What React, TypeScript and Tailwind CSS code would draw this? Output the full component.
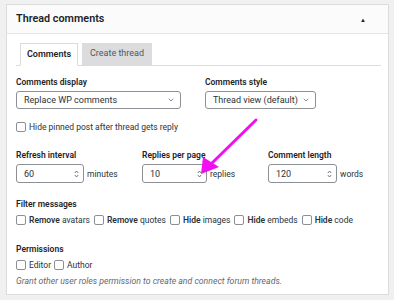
import { ChevronDown } from "lucide-react";

const font = { fontFamily: "Roboto, 'Noto Sans', sans-serif" };

function Box({ label }: { label: string }) {
  return (
    <label className="flex items-center gap-[3px] whitespace-nowrap">
      <span className="shrink-0 w-[10px] h-[10px] rounded-[2px] border border-[#8c8f94] bg-white" />
      <span>{label}</span>
    </label>
  );
}

function FilterBox({ bold, rest }: { bold: string; rest: string }) {
  return (
    <label className="flex items-center gap-[3px] whitespace-nowrap">
      <span className="shrink-0 w-[10px] h-[10px] rounded-[2px] border border-[#8c8f94] bg-white" />
      <span>
        <span className="font-semibold">{bold}</span> {rest}
      </span>
    </label>
  );
}

function Select({ value, width }: { value: string; width: string }) {
  return (
    <div
      className={`${width} h-[18px] flex items-center justify-between pl-[7px] pr-[5px] border border-[#8c8f94] rounded-[3px] bg-white text-[9px] text-[#2c3338] whitespace-nowrap`}
    >
      <span>{value}</span>
      <ChevronDown className="shrink-0 w-[8px] h-[8px] text-[#50575e]" strokeWidth={2} />
    </div>
  );
}

function Spinner() {
  return (
    <svg width="5" height="8" viewBox="0 0 5 8" className="shrink-0 text-[#50575e]">
      <path d="M0.8 3 L2.5 1 L4.2 3" fill="none" stroke="currentColor" strokeWidth="0.8" />
      <path d="M0.8 5 L2.5 7 L4.2 5" fill="none" stroke="currentColor" strokeWidth="0.8" />
    </svg>
  );
}

function NumberField({ label, value, unit, width }: { label: string; value: string; unit: string; width: string }) {
  return (
    <div className="flex flex-col gap-[3px]">
      <div className="font-semibold text-[8.5px] leading-[12px] text-[#1d2327] whitespace-nowrap">{label}</div>
      <div className="flex items-center gap-[3px]">
        <div
          className={`${width} h-[19px] flex items-center justify-between pl-[7px] pr-[4px] border border-[#8c8f94] rounded-[3px] bg-white text-[9px] text-[#2c3338]`}
        >
          <span>{value}</span>
          <Spinner />
        </div>
        <span className="text-[8.5px] text-[#2c3338]">{unit}</span>
      </div>
    </div>
  );
}

export default function App() {
  return (
    <div className="relative w-[394px] h-[300px] bg-[#f0f0f1] pt-[4px] pl-[6px] pr-[5px] pb-[5px] overflow-hidden" style={font}>
      <div className="h-full bg-white border border-[#dcdcde] flex flex-col">
        {/* Header */}
        <div className="shrink-0 h-[29px] flex items-center justify-between pl-[9px] pr-[22px] border-b border-[#e6e6e6] bg-[#fbfbfb]">
          <span className="text-[10.8px] font-semibold text-[#1d2327]">Thread comments</span>
          <span className="text-[6px] text-[#1d2327]">▲</span>
        </div>

        {/* Tabs */}
        <div className="shrink-0 mt-[9px] ml-[9px] mr-[7px] flex items-end gap-[4px] pl-[4px] border-b border-[#dcdcde]">
          <div className="h-[23px] w-[58px] flex items-center justify-center border border-[#dcdcde] border-b-white -mb-px bg-white text-[9px] font-semibold text-[#1d2327]">
            Comments
          </div>
          <div className="h-[22px] w-[70px] flex items-center justify-center border border-[#dcdcde] bg-[#dcdcde] text-[9px] text-[#50575e]">
            Create thread
          </div>
        </div>

        {/* Content */}
        <div className="pl-[9px] pr-[8px] pt-[10px] flex flex-col text-[8.5px] leading-[12px] text-[#2c3338]">
          <div className="flex">
            <div className="w-[189px] flex flex-col gap-[3px]">
              <div className="font-semibold text-[#1d2327]">Comments display</div>
              <Select value="Replace WP comments" width="w-[165px]" />
            </div>
            <div className="flex flex-col gap-[3px]">
              <div className="font-semibold text-[#1d2327]">Comments style</div>
              <Select value="Thread view (default)" width="w-[111px]" />
            </div>
          </div>

          <div className="mt-[12px]">
            <Box label="Hide pinned post after thread gets reply" />
          </div>

          <div className="mt-[16px] flex">
            <div className="w-[126px]">
              <NumberField label="Refresh interval" value="60" unit="minutes" width="w-[68px]" />
            </div>
            <div className="w-[126px]">
              <NumberField label="Replies per page" value="10" unit="replies" width="w-[65px]" />
            </div>
            <NumberField label="Comment length" value="120" unit="words" width="w-[69px]" />
          </div>

          <div className="mt-[15px] font-semibold text-[#1d2327]">Filter messages</div>
          <div className="mt-[4px] flex items-center gap-[4px]">
            <FilterBox bold="Remove" rest="avatars" />
            <FilterBox bold="Remove" rest="quotes" />
            <FilterBox bold="Hide" rest="images" />
            <FilterBox bold="Hide" rest="embeds" />
            <FilterBox bold="Hide" rest="code" />
          </div>

          <div className="mt-[17px] font-semibold text-[#1d2327]">Permissions</div>
          <div className="mt-[4px] flex items-center gap-[3px]">
            <Box label="Editor" />
            <Box label="Author" />
          </div>
          <div className="mt-[4px] italic text-[8.7px] text-[#646970] whitespace-nowrap">
            Grant other user roles permission to create and connect forum threads.
          </div>
        </div>
      </div>

      {/* Annotation arrow */}
      <svg className="absolute left-0 top-0 pointer-events-none" width="394" height="300" viewBox="0 0 394 300">
        <line x1="256" y1="120" x2="210" y2="165" stroke="#f00ff0" strokeWidth="3" strokeLinecap="round" />
        <polygon points="201,174 203,157 219,167" fill="#f00ff0" />
      </svg>
    </div>
  );
}
